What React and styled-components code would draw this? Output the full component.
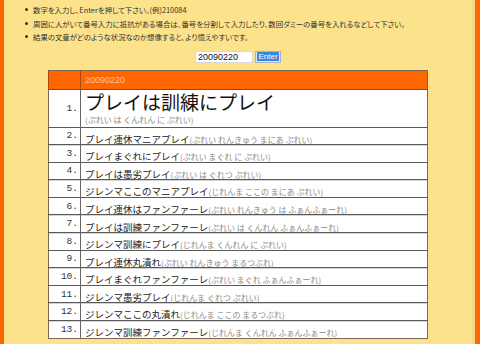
import styled, { createGlobalStyle } from 'styled-components'

const GlobalStyle = createGlobalStyle`
  html, body {
    margin: 0;
    padding: 0;
    background: #fce28b;
  }
`

const notes = [
  '数字を入力し、Enterを押して下さい。(例)210084',
  '周囲に人がいて番号入力に抵抗がある場合は、番号を分割して入力したり、数回ダミーの番号を入れるなどして下さい。',
  '結果の文章がどのような状況なのか想像すると、より憶えやすいです。',
]

const rows = [
  ['プレイ連休マニアプレイ', '(ぷれい れんきゅう まにあ ぷれい)'],
  ['プレイまぐれにプレイ', '(ぷれい まぐれ に ぷれい)'],
  ['プレイは愚劣プレイ', '(ぷれい は ぐれつ ぷれい)'],
  ['ジレンマここのマニアプレイ', '(じれんま ここの まにあ ぷれい)'],
  ['プレイ連休はファンファーレ', '(ぷれい れんきゅう は ふぁんふぁーれ)'],
  ['プレイは訓練ファンファーレ', '(ぷれい は くんれん ふぁんふぁーれ)'],
  ['ジレンマ訓練にプレイ', '(じれんま くんれん に ぷれい)'],
  ['プレイ連休丸潰れ', '(ぷれい れんきゅう まるつぶれ)'],
  ['プレイまぐれファンファーレ', '(ぷれい まぐれ ふぁんふぁーれ)'],
  ['ジレンマ愚劣プレイ', '(じれんま ぐれつ ぷれい)'],
  ['ジレンマここの丸潰れ', '(じれんま ここの まるつぶれ)'],
  ['ジレンマ訓練ファンファーレ', '(じれんま くんれん ふぁんふぁーれ)'],
]

export default function App() {
  return (
    <Page>
      <GlobalStyle />
      <Main>
        <Notes>
          {notes.map((n) => (
            <Note key={n}>{n}</Note>
          ))}
        </Notes>
        <Form>
          <NumberInput defaultValue="20090220" />
          <EnterButton>
            <span>Enter</span>
          </EnterButton>
        </Form>
        <Table>
          <thead>
            <tr>
              <HeadCell />
              <HeadCell $date>20090220</HeadCell>
            </tr>
          </thead>
          <tbody>
            <Row $big>
              <NumCell>1.</NumCell>
              <WordCell>
                <BigWord>プレイは訓練にプレイ</BigWord>
                <Reading $block>(ぷれい は くんれん に ぷれい)</Reading>
              </WordCell>
            </Row>
            {rows.map(([word, reading], i) => (
              <Row key={word}>
                <NumCell>{i + 2}.</NumCell>
                <WordCell>
                  <Word>{word}</Word>
                  <Reading>{reading}</Reading>
                </WordCell>
              </Row>
            ))}
          </tbody>
        </Table>
      </Main>
      <Edge />
    </Page>
  )
}

const Page = styled.div`
  display: flex;
  width: 480px;
  height: 344px;
  overflow: hidden;
  border-left: 4px solid #ff6600;
  box-sizing: border-box;
  background: #fce28b;
  font-family: 'Noto Sans CJK JP', sans-serif;
`
const Main = styled.div`
  flex: 1;
  display: flex;
  flex-direction: column;
  align-items: center;
`
const Edge = styled.div`
  width: 3px;
  background: #f4d987;
  border-right: 5px solid #ff6600;
`
const Notes = styled.ul`
  align-self: stretch;
  margin: 3px 0 0;
  padding: 0 0 0 29px;
  list-style: none;
`
const Note = styled.li`
  display: flex;
  align-items: center;
  height: 13.5px;
  font-size: 7.4px;
  color: #333;
  font-feature-settings: 'palt';
  white-space: nowrap;

  &::before {
    content: '';
    width: 3px;
    height: 3px;
    margin: 0 5px 0 -8px;
    border-radius: 50%;
    background: #333;
  }
`
const Form = styled.div`
  display: flex;
  gap: 2px;
  margin-top: 7px;
`
const NumberInput = styled.input`
  width: 58px;
  height: 12px;
  box-sizing: border-box;
  padding: 0 2px;
  border: 1px solid #d8d8d8;
  background: #fff;
  font-family: 'Liberation Sans', sans-serif;
  font-size: 9px;
  color: #111;
  outline: none;
`
const EnterButton = styled.button`
  display: flex;
  align-items: center;
  justify-content: center;
  width: 26px;
  height: 12px;
  padding: 0;
  border: 1px solid #a9b3c8;
  background: #dfe4ee;
  font-family: 'Liberation Sans', sans-serif;
  font-size: 8px;

  span {
    background: #3c86e0;
    color: #fff;
    padding: 0 1px;
    line-height: 9px;
  }
`
const Table = styled.table`
  width: 380px;
  margin-top: 7px;
  border-collapse: collapse;
  border: 1px solid #7a6a55;
  background: #fff;
`
const HeadCell = styled.th`
  height: 18px;
  padding: 0 0 0 4px;
  background: #ff6600;
  border-left: 1px solid #a84a10;
  color: #ffc89a;
  font-family: 'Liberation Sans', sans-serif;
  font-size: 9px;
  font-weight: normal;
  text-align: left;
  width: ${({ $date }) => ($date ? 'auto' : '27px')};
`
const Row = styled.tr`
  height: ${({ $big }) => ($big ? '38px' : '17.6px')};
  border-top: 1px solid #5a5a5a;
  box-shadow: inset 0 1px #d4d4d4;
`
const NumCell = styled.td`
  padding: 0 2px 0 0;
  text-align: right;
  border-right: 1px solid #666;
  font-family: 'Liberation Mono', monospace;
  font-size: 9.5px;
  color: #333;
  vertical-align: middle;
`
const WordCell = styled.td`
  padding: 0 0 0 4px;
  white-space: nowrap;
  vertical-align: middle;
  line-height: 1;
`
const BigWord = styled.div`
  font-size: 19px;
  line-height: 20px;
  color: #111;
`
const Word = styled.span`
  font-size: 9.5px;
  color: #222;
`
const Reading = styled.span`
  display: ${({ $block }) => ($block ? 'block' : 'inline')};
  font-size: 8px;
  color: #8a8a8a;
  margin-top: ${({ $block }) => ($block ? '4px' : '0')};
`
